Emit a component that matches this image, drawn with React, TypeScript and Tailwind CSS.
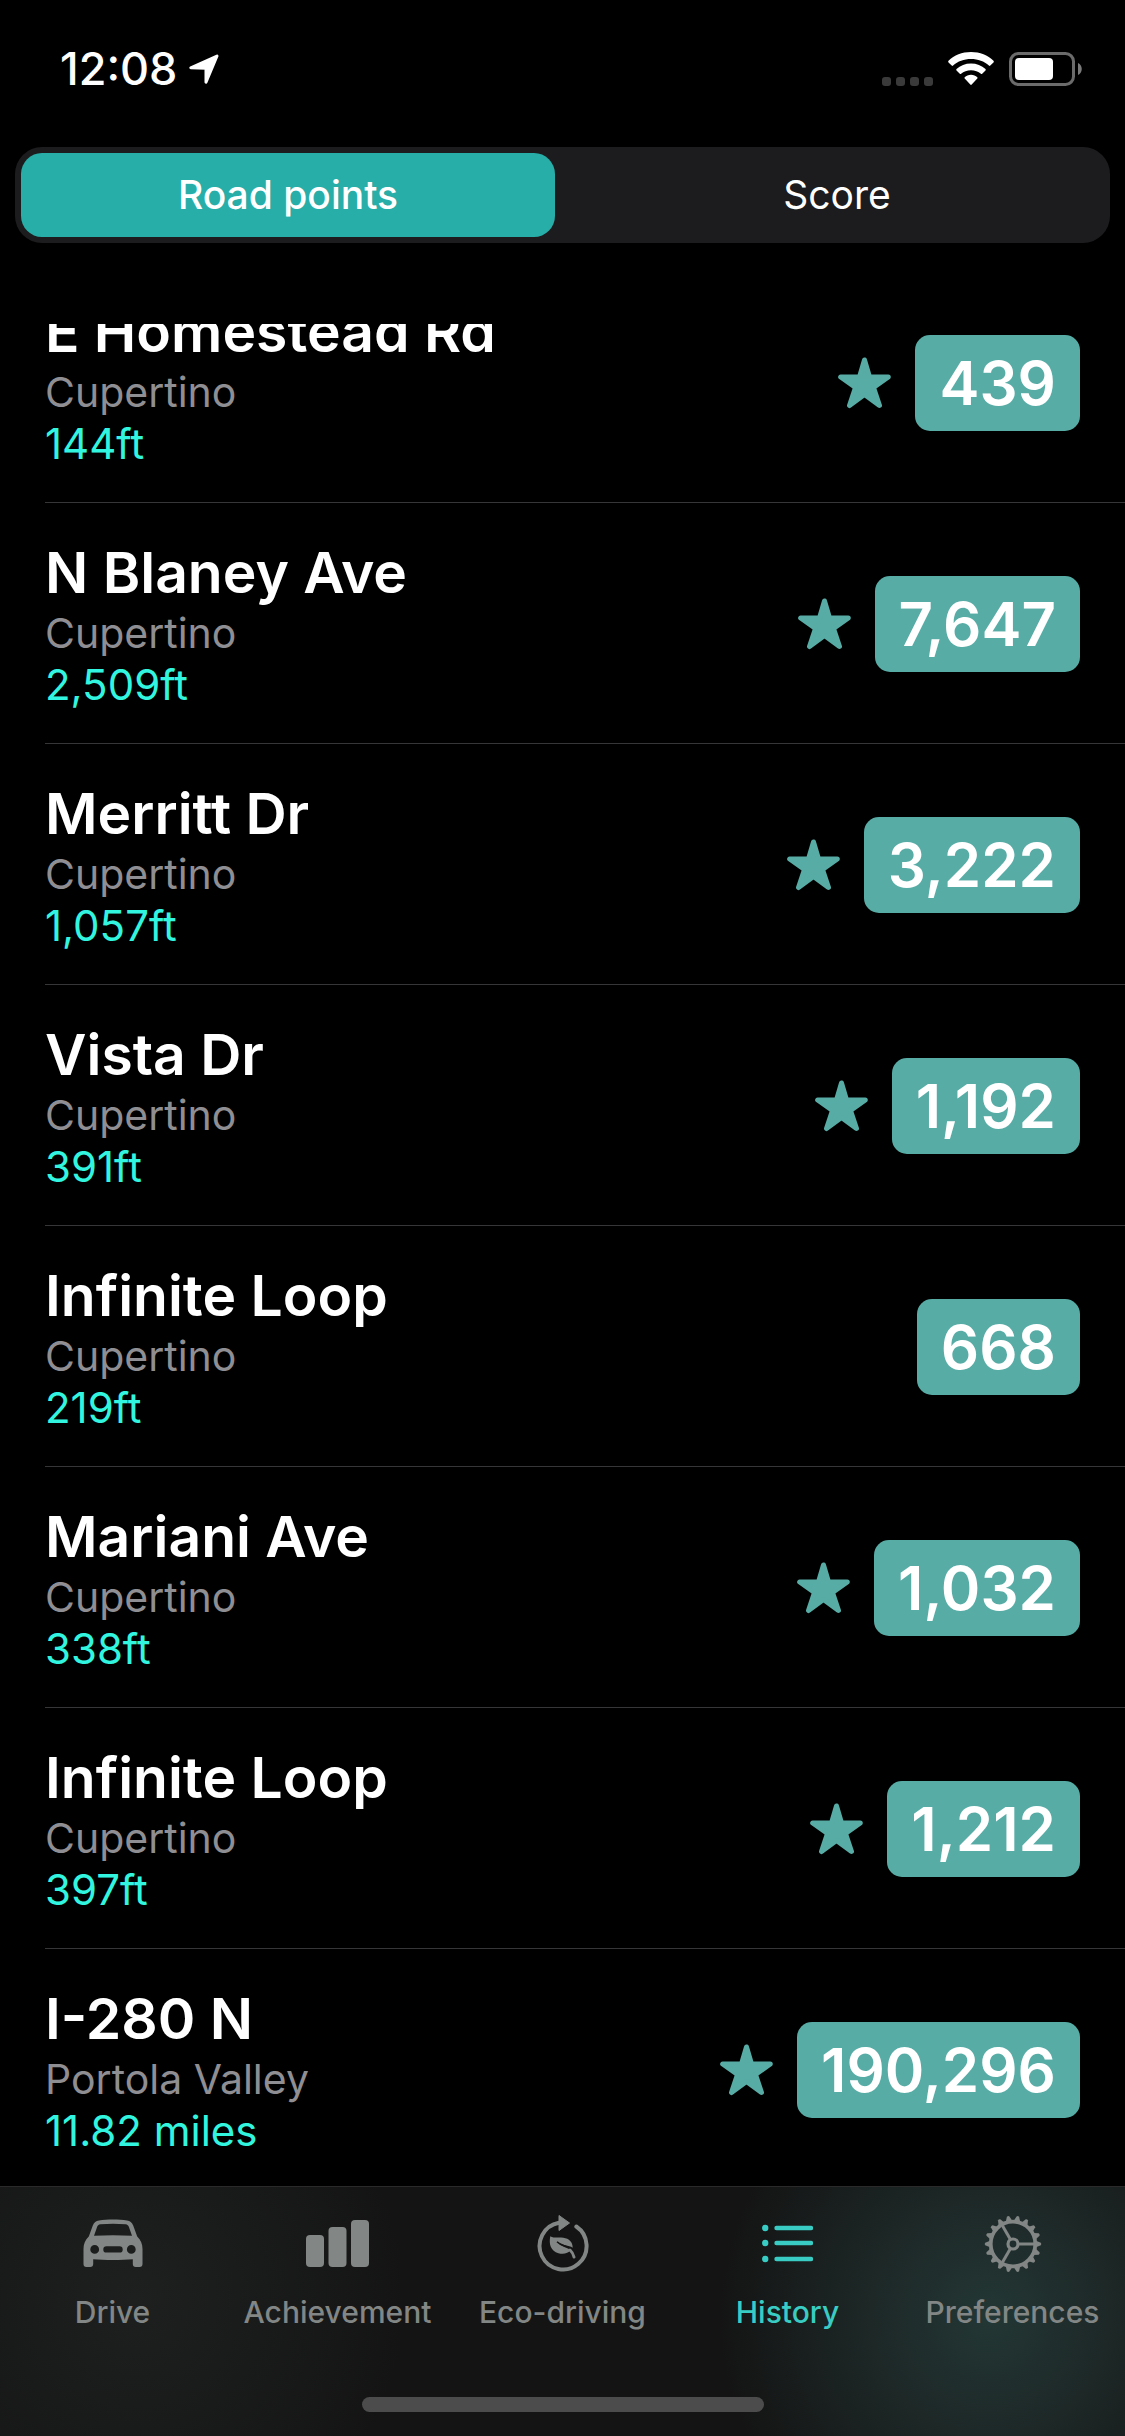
import clsx from 'clsx'
import { useLayoutEffect, useRef, useState } from 'react'
import type { ReactNode } from 'react'

interface Road {
  id: number
  name: string
  city: string
  distance: string
  points: number
  starred: boolean
}

const roads: Road[] = [
  { id: 1, name: 'E Homestead Rd', city: 'Cupertino', distance: '144ft', points: 439, starred: true },
  { id: 2, name: 'N Blaney Ave', city: 'Cupertino', distance: '2,509ft', points: 7647, starred: true },
  { id: 3, name: 'Merritt Dr', city: 'Cupertino', distance: '1,057ft', points: 3222, starred: true },
  { id: 4, name: 'Vista Dr', city: 'Cupertino', distance: '391ft', points: 1192, starred: true },
  { id: 5, name: 'Infinite Loop', city: 'Cupertino', distance: '219ft', points: 668, starred: false },
  { id: 6, name: 'Mariani Ave', city: 'Cupertino', distance: '338ft', points: 1032, starred: true },
  { id: 7, name: 'Infinite Loop', city: 'Cupertino', distance: '397ft', points: 1212, starred: true },
  { id: 8, name: 'I-280 N', city: 'Portola Valley', distance: '11.82 miles', points: 190296, starred: true },
]

const segments = ['Road points', 'Score']

const tabs: { label: string, icon: ReactNode }[] = [
  { label: 'Drive', icon: <CarIcon /> },
  { label: 'Achievement', icon: <BarsIcon /> },
  { label: 'Eco-driving', icon: <EcoIcon /> },
  { label: 'History', icon: <ListIcon /> },
  { label: 'Preferences', icon: <GearIcon /> },
]

export default function App() {
  const [segment, setSegment] = useState('Road points')
  const [tab, setTab] = useState('History')

  return (
    <div className="flex h-screen flex-col overflow-hidden bg-black font-['Inter','Liberation_Sans',sans-serif] text-white">
      <StatusBar />
      <div role="tablist" className="mx-[15px] mt-[15px] flex h-24 shrink-0 gap-[15px] rounded-[27px] bg-[#1c1c1e] p-1.5">
        {segments.map(name => (
          <button
            key={name}
            type="button"
            role="tab"
            aria-selected={segment === name}
            onClick={() => setSegment(name)}
            className={clsx('flex-1 rounded-[21px] text-[39px] leading-[48px]', segment === name ? 'bg-[#27aea8] font-medium' : 'font-normal')}
          >
            {name}
          </button>
        ))}
      </div>
      <RoadList />
      <TabBar active={tab} onSelect={setTab} />
    </div>
  )
}

function StatusBar() {
  return (
    <header className="flex h-[132px] shrink-0 items-center justify-between pt-1.5 pr-[43px] pl-[60px]">
      <div className="flex items-center gap-3">
        <time className="text-[45px] leading-[54px] font-medium">12:08</time>
        <svg width="30" height="30" viewBox="0 0 30 30" fill="#fff" stroke="#fff" strokeWidth="3" strokeLinejoin="round">
          <path d="M1.8 13.8 28 2 17 28.2V14.3z" />
        </svg>
      </div>
      <div className="flex items-center gap-[15px]">
        <div className="flex gap-[5px] self-end">
          {[0, 1, 2, 3].map(dot => <span key={dot} className="size-[9px] rounded-[3px] bg-[#3a3a3a]" />)}
        </div>
        <svg width="46" height="34" viewBox="0 0 46 34" fill="#fff">
          <path d="M23 0C14 0 6.200 3.300.500 8.800c-.5.500-.5 1.100 0 1.600l3.200 3.200c.4.400 1 .4 1.400 0C9.800 9.300 16 7 23 7s13.200 2.300 17.900 6.600c.4.400 1 .4 1.400 0l3.200-3.200c.5-.5.5-1.100 0-1.600C39.800 3.300 32 0 23 0z" />
          <path d="M23 11.500c-5.600 0-10.700 2-14.500 5.500-.4.400-.4 1 0 1.500l3.300 3.200c.4.400.9.400 1.300 0 2.600-2.200 6-3.500 9.900-3.500s7.300 1.300 9.900 3.500c.4.400.9.400 1.300 0l3.300-3.200c.4-.5.4-1.100 0-1.500-3.800-3.500-8.900-5.500-14.500-5.500z" />
          <path d="M23 22.800c-2.500 0-4.700.9-6.300 2.400-.4.400-.4.900 0 1.300l5.600 6.100c.4.500 1 .5 1.400 0l5.600-6.100c.4-.4.4-.9 0-1.300-1.600-1.500-3.800-2.400-6.300-2.400z" />
        </svg>
        <svg width="73" height="34" viewBox="0 0 73 34">
          <rect x="1.500" y="1.500" width="63" height="31" rx="8" fill="none" stroke="#6b6b6b" strokeWidth="3" />
          <rect x="6" y="6" width="38" height="22" rx="4" fill="#fff" />
          <path d="M69 11c5 2 5 10 0 12z" fill="#7a7a7a" />
        </svg>
      </div>
    </header>
  )
}

function RoadList() {
  const listRef = useRef<HTMLUListElement>(null)

  // The list opens part way through the first road
  useLayoutEffect(() => {
    if (listRef.current) {
      listRef.current.scrollTop = 62
    }
  }, [])

  return (
    <ul ref={listRef} className="mt-[81px] min-h-0 flex-1 overflow-y-auto [scrollbar-width:none]">
      {roads.map(road => <RoadRow key={road.id} road={road} />)}
    </ul>
  )
}

function RoadRow({ road }: { road: Road }) {
  return (
    <li className="ml-[45px] flex items-center justify-between border-b border-[#363638] pt-[35px] pr-[45px] pb-[33px]">
      <div>
        <h2 className="text-[57px] leading-[70px] font-semibold">{road.name}</h2>
        <p className="text-[41px] leading-[51px] text-[#8e8e93]">{road.city}</p>
        <p className="text-[42px] leading-[51px] text-[#32f5df]">{road.distance}</p>
      </div>
      <div className="flex items-center gap-6">
        {road.starred && <StarIcon />}
        <span className="flex h-24 items-center rounded-[15px] bg-[#57aca6] px-6 text-[60px] leading-[72px] font-semibold">
          {road.points.toLocaleString('en-US')}
        </span>
      </div>
    </li>
  )
}

function TabBar({ active, onSelect }: { active: string, onSelect: (label: string) => void }) {
  return (
    <nav className="shrink-0 border-t border-[#2a2a2a] bg-[#141414] bg-[radial-gradient(circle_at_88%_52%,#233735_0,#1d2827_120px,transparent_270px),radial-gradient(circle_at_12%_45%,#1e201f_0,#191b1a_130px,transparent_270px)] pb-6">
      <div className="flex">
        {tabs.map(({ label, icon }) => (
          <button
            key={label}
            type="button"
            aria-current={active === label ? 'page' : undefined}
            onClick={() => onSelect(label)}
            className={clsx('flex min-w-0 flex-1 flex-col items-center gap-[21px] pt-[26px] whitespace-nowrap', active === label ? 'text-[#38ccc4]' : 'text-[#828685]')}
          >
            {icon}
            <span className="text-[30px] leading-9 font-medium">{label}</span>
          </button>
        ))}
      </div>
      <div className="mx-auto mt-[67px] h-[15px] w-[402px] rounded-full bg-[#4c4c4c]" />
    </nav>
  )
}

function StarIcon() {
  return (
    <svg width="53" height="52" viewBox="0 0 53 52" fill="#57aca6" stroke="#57aca6" strokeWidth="5" strokeLinejoin="round">
      <path d="M26.500 3 L31.500 20 H50.300 L35.500 30.500 L41.500 48.500 L26.500 37.500 L11.500 48.500 L17.500 30.500 L2.700 20 H21.500 Z" />
    </svg>
  )
}

function CarIcon() {
  return (
    <svg width="60" height="60" viewBox="0 0 60 60" fill="currentColor">
      <path
        fillRule="evenodd"
        d="M16 7.400C24 6.300 36 6.300 44 7.400c3 .4 5 2 6.200 5l4 11c3.700 3.600 5.300 7.600 5.300 12.600v15c0 1.800-1 3-2.800 3h-4c-1.800 0-2.900-1.200-2.900-3v-4.800c-11 1-28.600 1-39.600 0V51c0 1.800-1.100 3-2.900 3h-4C1.500 54 .500 52.800.500 51V36c0-5 1.600-9 5.300-12.600l4-11c1.200-3 3.200-4.600 6.200-5zM17.500 11.300c-2 .2-2.900 1.200-3.500 2.900L11 22.800c12-.9 26-.9 38 0l-3-8.600c-.6-1.700-1.500-2.700-3.500-2.900-8-.7-17-.7-25 0zM11.700 32a4.400 4.400 0 1 0 0 8.800 4.400 4.400 0 0 0 0-8.800zM48.300 32a4.400 4.400 0 1 0 0 8.800 4.400 4.400 0 0 0 0-8.800zM23.500 33.200a3.200 3.200 0 0 0 0 6.400h13a3.200 3.200 0 0 0 0-6.400z"
      />
    </svg>
  )
}

function BarsIcon() {
  return (
    <svg width="63" height="60" viewBox="0 0 63 60" fill="currentColor">
      <rect x="0" y="22" width="18" height="32" rx="4" />
      <rect x="22.500" y="14" width="18" height="40" rx="4" />
      <rect x="45" y="7" width="18" height="47" rx="4" />
    </svg>
  )
}

function EcoIcon() {
  return (
    <svg width="60" height="60" viewBox="0 0 60 60" fill="currentColor">
      <path d="M43.300 13.500A23.500 23.500 0 1 1 26 9.800" fill="none" stroke="currentColor" strokeWidth="4" strokeLinecap="round" />
      <path d="M26 2.500 36.500 10 26 17.500z" stroke="currentColor" strokeWidth="1" strokeLinejoin="round" />
      <path d="M17.300 23.200c3.400 2.200 8 1 13 1.600 6 .8 9.300 4.300 9.400 9.900-4.200-2.400-9.800-2-15.700-5.900 3.500 4.800 9.600 5.500 13.700 8.200-2.600 3.500-7.400 4.700-12.300 3.200-7.500-2.300-9.800-8.800-8.100-17z" />
      <path d="M24 28.800c4.500 4.600 10.600 3.600 14.300 7.600 1.600 1.700 2.700 4.200 3.200 7.400" fill="none" stroke="#141414" strokeWidth="1.500" />
      <path d="M37 37c2.200 2 3.400 4.300 4 7" fill="none" stroke="currentColor" strokeWidth="3" strokeLinecap="round" />
    </svg>
  )
}

function ListIcon() {
  return (
    <svg width="51" height="60" viewBox="0 0 51 60" fill="none" stroke="currentColor" strokeLinecap="round">
      {[15, 30, 46].map(y => (
        <g key={y}>
          <circle cx="3.200" cy={y} r="3.200" fill="currentColor" stroke="none" />
          <path d={`M14.500 ${y}H49`} strokeWidth="4.400" />
        </g>
      ))}
    </svg>
  )
}

function GearIcon() {
  return (
    <svg width="60" height="60" viewBox="-30 -31 60 60" fill="none" stroke="currentColor">
      <circle r="22.300" strokeWidth="3.800" />
      <circle r="5" strokeWidth="3.200" />
      {[0, 120, 240].map(angle => (
        <path key={angle} d="M6 0H21" strokeWidth="3" transform={`rotate(${angle})`} />
      ))}
      {Array.from({ length: 18 }, (_, i) => (
        <path key={i} d="M23-3.300 27.800-1.300Q28.800 0 27.800 1.300L23 3.300z" fill="currentColor" stroke="none" transform={`rotate(${i * 20})`} />
      ))}
    </svg>
  )
}
